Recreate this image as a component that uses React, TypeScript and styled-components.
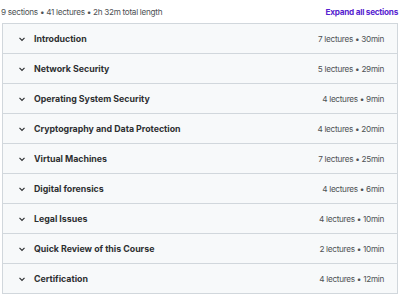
import React from "react";
import styled, { createGlobalStyle } from "styled-components";

const Global = createGlobalStyle`
  html, body { margin: 0; padding: 0; background: #ffffff; }
  body { font-family: Inter, "Noto Sans", sans-serif; color: #2d2f31; }
`;

const Page = styled.div`
  width: 400px;
  padding: 0 2px 0 1px;
  box-sizing: border-box;
`;

const Header = styled.div`
  display: flex;
  justify-content: space-between;
  align-items: center;
  height: 23px;
`;

const Summary = styled.span`
  font-size: 8.2px;
  letter-spacing: -0.3px;
  color: #4e5255;
`;

const ExpandLink = styled.span`
  font-size: 8.2px;
  letter-spacing: -0.25px;
  font-weight: 700;
  color: #5624d0;
`;

const List = styled.div`
  margin-left: 1px;
  border: 1px solid #d1d7dc;
  border-bottom: none;
`;

const Row = styled.div`
  display: flex;
  align-items: center;
  height: 29px;
  border-bottom: 1px solid #d1d7dc;
  background: #f7f9fa;
  padding: 0 13px 0 15px;
`;

const Chevron = styled.svg`
  width: 8px;
  height: 8px;
  flex: none;
  margin-right: 8px;
`;

const Title = styled.span`
  flex: 1;
  font-size: 8.8px;
  font-weight: 700;
  color: #2d2f31;
`;

const Meta = styled.span`
  font-size: 8.2px;
  letter-spacing: -0.3px;
  color: #4e5255;
`;

const sections = [
  ["Introduction", "7 lectures • 30min"],
  ["Network Security", "5 lectures • 29min"],
  ["Operating System Security", "4 lectures • 9min"],
  ["Cryptography and Data Protection", "4 lectures • 20min"],
  ["Virtual Machines", "7 lectures • 25min"],
  ["Digital forensics", "4 lectures • 6min"],
  ["Legal Issues", "4 lectures • 10min"],
  ["Quick Review of this Course", "2 lectures • 10min"],
  ["Certification", "4 lectures • 12min"],
];

export default function App() {
  return (
    <Page>
      <Global />
      <Header>
        <Summary>9 sections • 41 lectures • 2h 32m total length</Summary>
        <ExpandLink>Expand all sections</ExpandLink>
      </Header>
      <List>
        {sections.map(([t, m]) => (
          <Row key={t}>
            <Chevron viewBox="0 0 8 8">
              <path d="M1.5 2.8 L4 5.3 L6.5 2.8" fill="none" stroke="#2d2f31" strokeWidth="1.2" />
            </Chevron>
            <Title>{t}</Title>
            <Meta>{m}</Meta>
          </Row>
        ))}
      </List>
    </Page>
  );
}
